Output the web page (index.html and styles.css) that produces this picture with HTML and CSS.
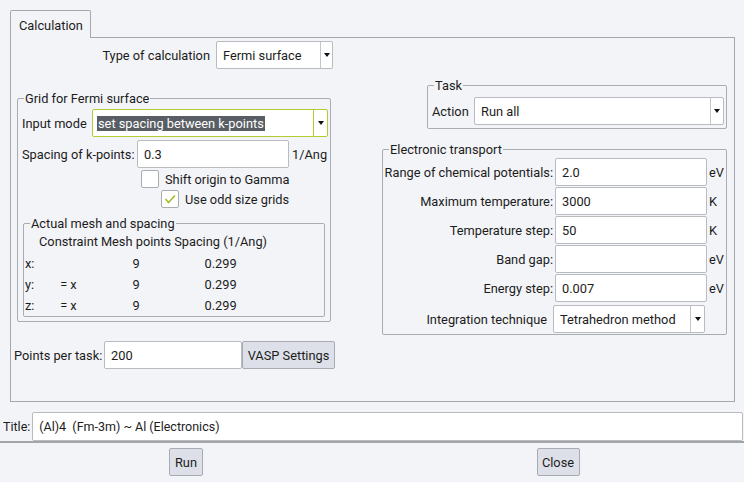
FILE: index.html
```html
<!DOCTYPE html>
<html>
<head>
<meta charset="utf-8">
<link rel="stylesheet" href="styles.css">
</head>
<body>
<div class="tabbar"><div class="tab">Calculation</div></div>
<div class="panel">
  <div class="col-left">
    <div class="type-row">
      <span>Type of calculation</span>
      <div class="combo combo-type"><span class="combo-text">Fermi surface</span><span class="combo-arrow"></span></div>
    </div>
    <div class="group grid-group">
      <div class="legend">Grid for Fermi surface</div>
      <div class="row mode-row">
        <span class="lbl-mode">Input mode</span>
        <div class="combo combo-mode"><span class="combo-text"><span class="hl">set spacing between k-points</span></span><span class="combo-arrow"></span></div>
      </div>
      <div class="row spacing-row">
        <span class="lbl-spacing">Spacing of k-points:</span>
        <input class="field field-spacing" type="text" value="0.3">
        <span class="unit">1/Ang</span>
      </div>
      <div class="check-row check1"><span class="checkbox"></span><span class="check-text">Shift origin to Gamma</span></div>
      <div class="check-row check2"><span class="checkbox"><svg width="16" height="16" viewBox="0 0 16 16"><polyline points="3.5,8 6.5,11.5 13,4.5" fill="none" stroke="#a4be2e" stroke-width="1.6"/></svg></span><span class="check-text">Use odd size grids</span></div>
      <div class="group mesh-group">
        <div class="legend">Actual mesh and spacing</div>
        <div class="mesh">
          <span class="c0 head"></span><span class="cc head">Constraint</span><span class="cc head">Mesh points</span><span class="cc head">Spacing (1/Ang)</span>
          <span class="c0">x:</span><span class="cc"></span><span class="cc">9</span><span class="cc">0.299</span>
          <span class="c0">y:</span><span class="cc">= x</span><span class="cc">9</span><span class="cc">0.299</span>
          <span class="c0">z:</span><span class="cc">= x</span><span class="cc">9</span><span class="cc">0.299</span>
        </div>
      </div>
    </div>
    <div class="row points-row">
      <span class="lbl-points">Points per task:</span>
      <input class="field field-points" type="text" value="200">
      <button class="btn btn-vasp">VASP Settings</button>
    </div>
  </div>
  <div class="col-right">
    <div class="group task-group">
      <div class="legend">Task</div>
      <div class="row action-row">
        <span class="lbl-action">Action</span>
        <div class="combo combo-action"><span class="combo-text">Run all</span><span class="combo-arrow"></span></div>
      </div>
    </div>
    <div class="group et-group">
      <div class="legend">Electronic transport</div>
      <div class="et-row first"><span class="et-lbl">Range of chemical potentials:</span><input class="field et-field" type="text" value="2.0"><span class="et-unit">eV</span></div>
      <div class="et-row"><span class="et-lbl">Maximum temperature:</span><input class="field et-field" type="text" value="3000"><span class="et-unit">K</span></div>
      <div class="et-row"><span class="et-lbl">Temperature step:</span><input class="field et-field" type="text" value="50"><span class="et-unit">K</span></div>
      <div class="et-row"><span class="et-lbl">Band gap:</span><input class="field et-field" type="text" value=""><span class="et-unit">eV</span></div>
      <div class="et-row"><span class="et-lbl">Energy step:</span><input class="field et-field" type="text" value="0.007"><span class="et-unit">eV</span></div>
      <div class="et-row int-row"><span class="int-lbl">Integration technique</span><div class="combo combo-int"><span class="combo-text">Tetrahedron method</span><span class="combo-arrow"></span></div></div>
    </div>
  </div>
</div>
<div class="title-row">
  <span class="title-lbl">Title:</span>
  <input class="field title-field" type="text" value="(Al)4  (Fm-3m) ~ Al (Electronics)">
</div>
<div class="separator"></div>
<div class="button-row">
  <div class="cell"><button class="btn btn-run">Run</button></div>
  <div class="cell"><button class="btn btn-close">Close</button></div>
</div>
</body>
</html>
```
FILE: styles.css
```css
* { box-sizing: border-box; }
html, body { margin: 0; padding: 0; }
body {
  width: 744px;
  height: 482px;
  overflow: hidden;
  background: #f3f4f8;
  font-family: Roboto, "Noto Sans", sans-serif;
  font-size: 12.8px;
  line-height: 15px;
  color: #1c1c1c;
}
.tabbar { display: flex; height: 37px; padding: 10px 0 0 10px; }
.tab {
  width: 81px;
  height: 28px;
  border: 1px solid #a4a7ac;
  border-bottom: none;
  border-radius: 2px 2px 0 0;
  padding: 7px 0 0 8px;
  background: #f3f4f8;
  position: relative;
  z-index: 1;
}
.panel {
  margin-left: 10px;
  width: 725px;
  height: 365px;
  border: 1px solid #a4a7ac;
  display: flex;
  padding-left: 3px;
}
.col-left { width: 321px; display: flex; flex-direction: column; }
.col-right { width: 345px; margin-left: 47px; display: flex; flex-direction: column; }

.row { display: flex; align-items: center; height: 28px; }
.type-row {
  margin-top: 3px;
  height: 28px;
  display: flex;
  align-items: center;
  justify-content: flex-end;
  gap: 6px;
  padding-right: 2px;
}

.combo {
  height: 28px;
  background: #fff;
  border: 1px solid #b8bbc0;
  border-radius: 2px;
  display: flex;
  align-items: center;
}
.combo-text { flex: 1; padding-left: 6px; white-space: nowrap; overflow: hidden; }
.combo-arrow {
  width: 12px;
  height: 100%;
  border-left: 1px solid #c2c5ca;
  display: flex;
  align-items: center;
  justify-content: center;
}
.combo-arrow::after {
  content: "";
  border-left: 3.5px solid transparent;
  border-right: 3.5px solid transparent;
  border-top: 4px solid #111;
}
.combo-type { width: 117px; }
.combo-mode { width: 236px; border-color: #b3ca30; }
.combo-mode .combo-text { padding-left: 4px; }
.combo-mode .combo-arrow { width: 14px; border-left-color: #b3ca30; }
.hl { background: #585e63; color: #fff; padding: 0 1px; }
.combo-action { width: 250px; }
.combo-action .combo-arrow { width: 13px; }
.combo-int { width: 152px; }
.combo-int .combo-arrow { width: 14px; }

.field {
  height: 28px;
  border: 1px solid #b8bbc0;
  border-radius: 2px;
  background: #fff;
  font-family: Roboto, "Noto Sans", sans-serif;
  font-size: 12.8px;
  color: #1c1c1c;
  padding: 0 0 0 6px;
  margin: 0;
  outline: none;
}

.group { border: 1px solid #a9acb1; border-radius: 2px; }
.legend {
  margin: -8px 0 0 6px;
  padding: 0 1px;
  width: max-content;
  background: #f3f4f8;
  line-height: 15px;
}

.grid-group { margin: 29px 0 0 3px; width: 314px; padding-bottom: 4px; }
.mode-row { margin-top: 3px; padding-left: 4px; }
.lbl-mode { width: 70px; }
.spacing-row { margin-top: 3px; padding-left: 4px; }
.lbl-spacing { width: 115px; }
.field-spacing { width: 152px; }
.unit { margin-left: 3px; }

.check-row { display: flex; align-items: center; height: 18px; margin-top: 2px; }
.check1 { padding-left: 123px; }
.check2 { padding-left: 143px; }
.checkbox {
  width: 18px;
  height: 18px;
  background: #fff;
  border: 1px solid #a9acb1;
  border-radius: 2px;
  display: flex;
  align-items: center;
  justify-content: center;
}
.check-text { margin-left: 6px; }

.mesh-group { margin: 15px 5px 0 5px; }
.mesh {
  display: grid;
  grid-template-columns: 11px auto auto auto;
  grid-template-rows: 22px 21px 21px 21px;
  column-gap: 3px;
  justify-content: start;
  padding-left: 1px;
  line-height: 21px;
}
.mesh .c0 { justify-self: start; }
.mesh .cc { justify-self: center; }
.mesh .head { line-height: 22px; }

.points-row { margin-top: 19px; }
.lbl-points { width: 90px; }
.field-points { width: 138px; }
.btn {
  font-family: Roboto, "Noto Sans", sans-serif;
  font-size: 12.8px;
  color: #1c1c1c;
  background: #dde0e8;
  border: 1px solid #a8abb1;
  border-radius: 2px;
  height: 28px;
  padding: 0;
  margin: 0;
}
.btn-vasp { width: 93px; }

.task-group { margin: 47px 0 0 45px; width: 300px; padding-bottom: 3px; }
.action-row { margin-top: 4px; padding-left: 4px; }
.lbl-action { width: 42px; }

.et-group { margin-top: 20px; width: 345px; padding-bottom: 1px; }
.et-row { display: flex; align-items: center; height: 28px; margin-top: 1px; }
.et-row.first { margin-top: 1px; }
.et-lbl { width: 172px; text-align: right; padding-right: 2px; white-space: nowrap; }
.et-field { width: 152px; }
.et-unit { margin-left: 2px; }
.int-row { margin-top: 3px; }
.int-lbl { width: 170px; text-align: right; padding-right: 6px; white-space: nowrap; }

.title-row {
  margin-top: 10px;
  height: 29px;
  display: flex;
  align-items: center;
  gap: 2px;
  padding: 0 1px 0 3px;
  font-size: 12.5px;
}
.title-field { flex: 1; height: 29px; font-size: 12.5px; }
.separator { height: 2px; background: #a2a5a9; }
.button-row { display: grid; grid-template-columns: 1fr 1fr; margin-top: 5px; }
.cell { display: flex; justify-content: center; }
.btn-run { width: 34px; }
.btn-close { width: 43px; }
```
